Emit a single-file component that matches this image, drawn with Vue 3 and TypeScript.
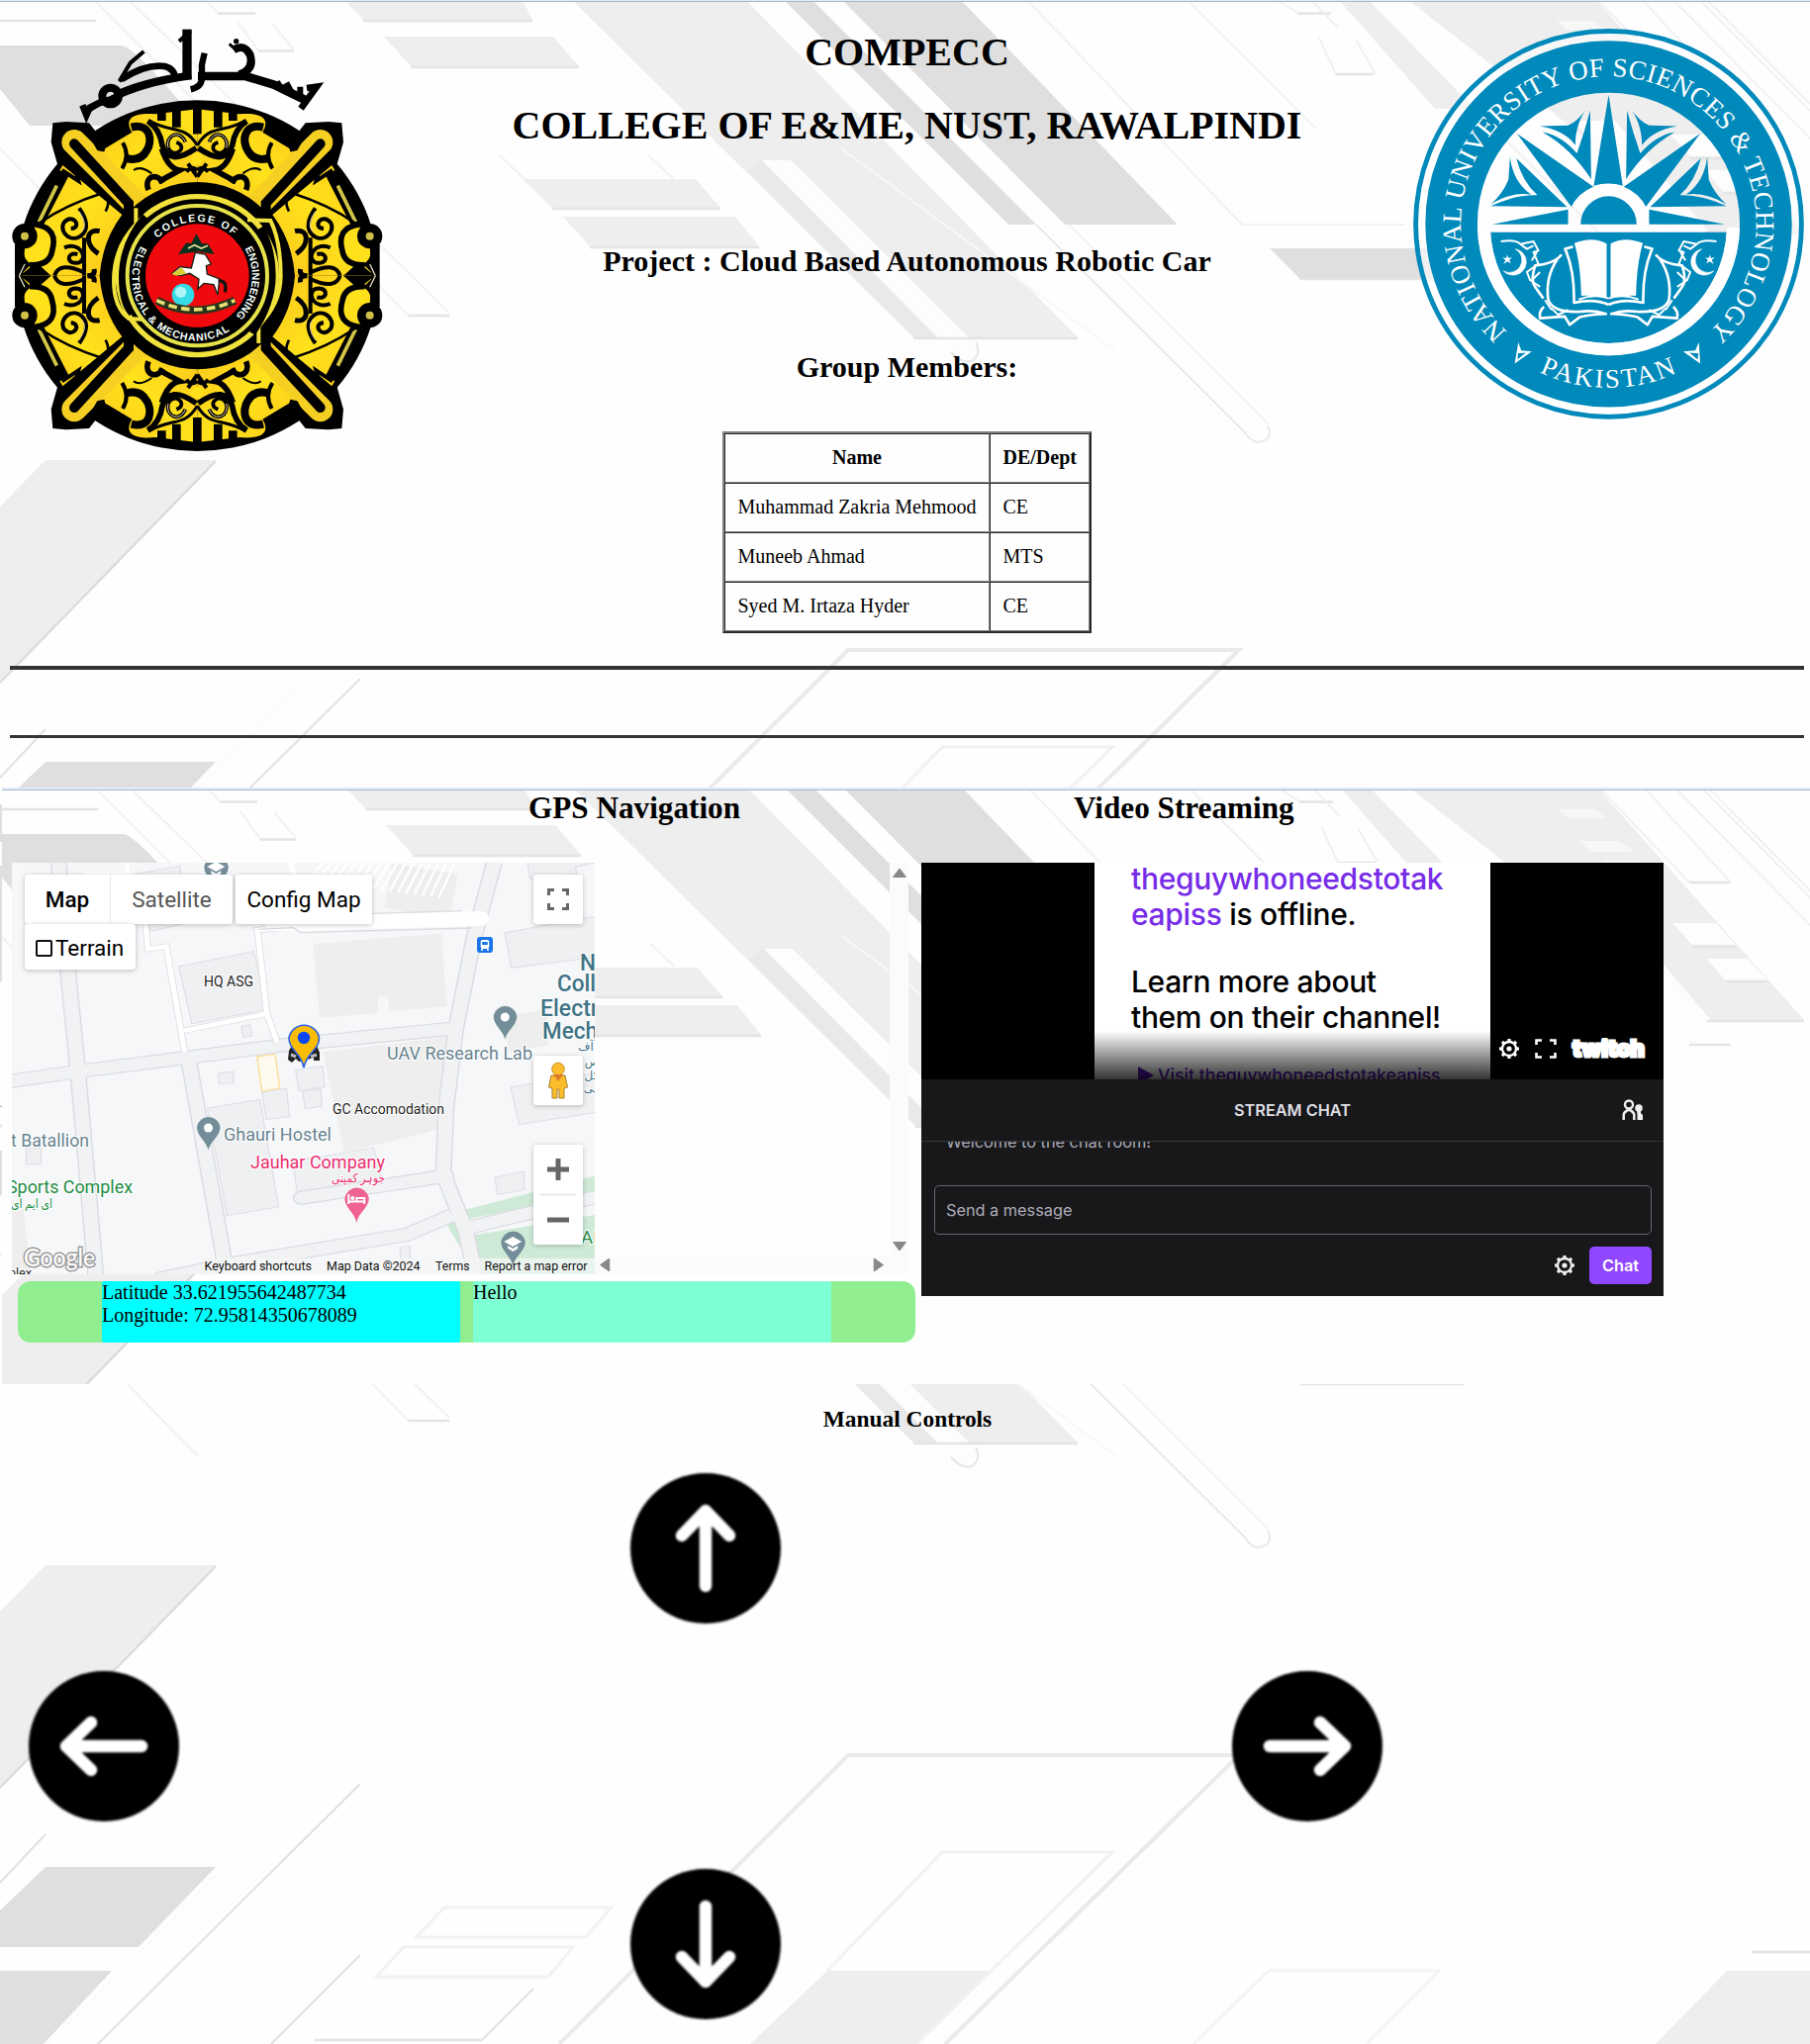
<script setup lang="ts">
interface Member { name: string; dept: string }
interface MapLabel { text: string; x: number; y: number; w: number; size: number; color: string; bold?: boolean }

const members: Member[] = [
  { name: 'Muhammad Zakria Mehmood', dept: 'CE' },
  { name: 'Muneeb Ahmad', dept: 'MTS' },
  { name: 'Syed M. Irtaza Hyder', dept: 'CE' },
]

const labels: MapLabel[] = [
  { text: 'HQ ASG', x: 206, y: 997, w: 50, size: 14.5, color: '#222' },
  { text: 'GC Accomodation', x: 336, y: 1126, w: 113, size: 14.5, color: '#222' },
  { text: 'UAV Research Lab', x: 391, y: 1070.5, w: 147, size: 18, color: '#67838f' },
  { text: 'Ghauri Hostel', x: 226, y: 1152.5, w: 109, size: 18, color: '#67838f' },
  { text: 't Batallion', x: 11, y: 1158.5, w: 79, size: 18, color: '#67838f' },
  { text: 'Jauhar Company', x: 253, y: 1180.5, w: 136, size: 18, color: '#e92d6e' },
  { text: 'Sports Complex', x: 7, y: 1206, w: 127, size: 18, color: '#218c43' },
  { text: 'N', x: 586, y: 980.5, w: 16, size: 23, color: '#3f7385', bold: true },
  { text: 'College', x: 563, y: 1001.5, w: 76, size: 23, color: '#3f7385', bold: true },
  { text: 'Electrical', x: 546, y: 1027, w: 95, size: 23, color: '#3f7385', bold: true },
  { text: 'Mechanical', x: 548, y: 1050, w: 116, size: 23, color: '#3f7385', bold: true },
  { text: 'AP', x: 587, y: 1257, w: 24, size: 18, color: '#218c43' },
  { text: 'plex', x: 9, y: 1291, w: 23, size: 13.5, color: '#222' },
]

const footer = [
  { text: 'Keyboard shortcuts', x: 206.5, w: 108.5 },
  { text: 'Map Data ©2024', x: 330, w: 94.5 },
  { text: 'Terms', x: 440, w: 34.5 },
  { text: 'Report a map error', x: 489.5, w: 104 },
]

const greyPins = [
  { x: 210.5, y: 1140 },
  { x: 510.3, y: 1028 },
]

const schoolPins = [
  { x: 218.3, y: 877 },
  { x: 518.3, y: 1256 },
]

const teeth = [0, 45, 90, 135, 180, 225, 270, 315]

const controls = [
  { dir: 'up', rot: 0 },
  { dir: 'left', rot: -90 },
  { dir: 'right', rot: 90 },
  { dir: 'down', rot: 180 },
]
</script>

<template>
  <div class="page">
    <svg class="backdrop" width="1829" height="2066" viewBox="0 0 1829 2066" aria-hidden="true">
      <defs>
        <symbol id="tile" viewBox="0 0 1829 1120">
          <rect width="1829" height="1120" fill="#fefefe" />
          <g fill="#eee">
            <path d="M348 0H528L538 20H367Z" />
            <path d="M388 37H559L585 67H415Z" />
            <path d="M528 181H703L728 210H558Z" />
            <path d="M569 219H743L767 249H596Z" />
            <path d="M578 0H754L1089 341H923Z" />
            <path d="M1353 0H1383L1490 110H1450Z" />
            <path d="M1423 0H1613L1821 234H1723Z" />
            <path d="M46 465H218L0 690V512Z" />
            <path d="M836 875H1001L926 949L820 1053H660L758 949Z" />
            <path d="M1745 875H1829V1003H1620Z" />
          </g>
          <path d="M0 46H123C140 50 180 103 205 127H30L0 90Z" fill="#dfdfdf" />
          <g fill="#dfdfdf">
            <path d="M792 0H821L1047 227H1019Z" />
            <path d="M851 0H971L1190 227H1076Z" />
            <path d="M1283 251H1480V281H1313Z" />
            <path d="M46 770H218L140 851H0V814Z" />
            <path d="M0 875H113L44 949L0 993Z" />
          </g>
          <path d="M770 162L948 341H923L755 172Z" fill="#e9e9e9" />
          <path d="M770 162H799L984 346Q992 364 973 363Q966 362 961 355Z" fill="#fdfdfd" />
          <g fill="#fdfdfd">
            <path d="M1590 122H1632L1747 258H1705Z" />
            <path d="M1688 136H1732L1752 158H1708Z" />
            <path d="M1722 172H1764L1784 194H1742Z" />
            <path d="M1573 21H1610L1622 30H1583ZM1594 53H1634L1650 64H1606ZM1616 73H1655L1663 83H1626Z" opacity=".6" />
          </g>
          <g fill="none" stroke="#e4e4e4" stroke-width="2.5">
            <path d="M0 21H97M220 13.500H258M261 51.500H297M413 319H454M367 21H538M415 68H585M558 211H728M596 250H767M923 342H1089M1313 282H1480M1723 235H1821M1705 259H1747M1705 95H1747M1708 160H1752M1742 195H1784M1311 13.500H1345M1350 75H1388M1770 856H1829M318 945H488" />
          </g>
          <g fill="none" stroke="#f1f1f1" stroke-width="2">
            <path d="M95 0L413 319M130 0L454 316M208 0L220 13M240 22L261 51M275 24L297 50M1038 0L1255 227H1420M0 150L200 355" />
            <path d="M1080 227L1281 428" />
            <path d="M1047 227L1258 437Q1268 453 1281 443Q1285 438 1281 430" stroke="#e9e9e9" />
            <path d="M850 150L1128 355" stroke="#f8f8f8" />
            <path d="M986 346Q992 358 982 365Q972 368 961 356" stroke="#e6e6e6" />
            <path d="M1615 0L1705 95M1660 0L1747 95M1691 0L1829 140M1718 0L1829 112M1725 0L1829 105" />
            <path d="M1290 0L1311 13M1333 38L1350 75M1370 40L1390 75M1325 0L1352 28" />
            <path d="M1490 110L1620 240M1200 0L1330 130M505 157L530 181M655 157L680 180" />
          </g>
          <g fill="none" stroke="#eaeaea" stroke-width="3">
            <path d="M218 466L0 690" stroke-width="2.500" stroke="#dcdcdc" />
            <path d="M364 686L99 949M46 737L0 786M364 859L274 949M539 893L488 944" stroke-width="2" stroke="#e1e1e1" />
            <path d="M565 949L857 657H1252L955 949" stroke-width="4" />
            <path d="M836 875L952 755H1124L926 949" stroke="#f1f1f1" />
            <path d="M449 811H618L592 841H421ZM408 851H579L554 881H380Z" stroke="#f2f2f2" />
            <path d="M1206 949L1282 875H1454L1381 949" stroke="#f3f3f3" />
            <path d="M310 687L48 949" stroke="#fafafa" stroke-width="2" />
          </g>
          <rect width="1829" height="1" fill="#e1ebf8" />
          <rect y="1" width="1829" height="1" fill="#a9b8cc" />
        </symbol>
        <symbol id="gear" viewBox="-12 -12 24 24">
          <g fill="currentColor">
            <rect v-for="a in teeth" :key="a" x="-1.600" y="-10" width="3.200" height="3" :transform="`rotate(${a})`" />
          </g>
          <circle r="7" fill="none" stroke="currentColor" stroke-width="2.300" /><circle r="2.600" fill="currentColor" />
        </symbol>
      </defs>
      <use href="#tile" width="1829" height="1120" />
      <use href="#tile" y="1117" width="1829" height="1120" />
    </svg>

    <header class="head">
      <svg class="crest" width="392" height="440" viewBox="36 80 1176 1320" role="img" aria-label="College of E&amp;ME crest">
        <defs>
          <linearGradient id="gold" x1="0" y1="0" x2="1" y2="1">
            <stop offset="0" stop-color="#fdc81a" /><stop offset=".5" stop-color="#ffe21c" /><stop offset="1" stop-color="#fbc51c" />
          </linearGradient>
          <g id="quarter">
            <path d="M160 372L200 368L270 372L300 410L340 440L240 520L175 500L155 430Z" fill="#000" />
            <path d="M225 430L440 655" stroke="#000" stroke-width="104" fill="none" />
            <path d="M300 460L400 400C370 350 420 340 470 345L598 330V560Q500 560 425 620Z" fill="url(#gold)" />
            <path d="M190 500L370 650Q310 730 302 835H60L95 800Q60 780 80 740L110 680L150 570Z" fill="url(#gold)" />
            <path d="M225 430L425 630" stroke="#f5cf22" stroke-width="76" stroke-linecap="round" fill="none" />
            <path d="M225 435L390 615V700" stroke="#000" stroke-width="30" stroke-linecap="round" fill="none" />
            <path d="M270 395L300 448L318 452" stroke="#000" stroke-width="16" fill="none" />
            <g fill="none" stroke="#000" stroke-width="24">
              <path d="M398 385C460 370 462 430 445 455Q425 492 380 478" />
              <path d="M370 510Q395 470 372 432" stroke-width="12" />
              <path d="M448 366Q485 390 492 440Q512 505 595 448" stroke-width="17" />
              <path d="M452 364C520 405 560 375 598 440" stroke-width="9" />
              <path d="M562 430C545 388 500 410 510 447C525 485 575 445 535 430" stroke-width="11" />
              <path d="M562 430C545 388 500 410 510 447" stroke="#e9d8b8" stroke-width="3" />
              <path d="M490 450Q510 510 545 515L480 550M450 575C435 535 475 520 495 553" stroke-width="17" />
              <path d="M405 515Q425 500 460 525" stroke-width="6" />
              <path d="M565 520Q580 500 598 515M570 495L598 535" stroke-width="12" />
              <path d="M490 325V365M535 325V385" stroke-width="26" />
              <path d="M598 320V405" stroke-width="26" />
              <path d="M225 500L238 548L188 515" stroke-width="12" />
              <path d="M190 520L108 680" stroke-width="44" /><path d="M172 562L118 672" stroke="#d2c648" stroke-width="11" />
              <path d="M108 680Q178 690 158 760Q150 805 90 802" stroke-width="17" />
              <path d="M120 675Q200 620 310 585Q340 600 320 640" stroke-width="8" />
              <path d="M240 630Q275 680 252 708C220 742 178 705 193 675C220 640 252 690 215 692" stroke-width="12" />
              <path d="M240 640Q268 680 248 702" stroke="#e9d8b8" stroke-width="3" />
              <path d="M302 700C260 690 255 740 298 768" stroke-width="15" />
              <path d="M195 750C240 730 270 780 240 795C200 805 200 760 235 770M165 835Q180 790 255 825M255 720V835" stroke-width="12" />
              <path d="M265 835Q290 835 285 815" stroke-width="15" />
            </g>
            <circle cx="75" cy="715" r="38" /><circle cx="75" cy="715" r="12" fill="#cfc14a" />
            <path d="M45 740H75L70 835H45Z" />
            <path d="M60 835L110 795L155 835Z" /><path d="M75 800L58 835" stroke="#e6dfc4" stroke-width="4" />
          </g>
        </defs>
        <ellipse cx="598" cy="835" rx="550" ry="532" />
        <use href="#quarter" />
        <use href="#quarter" transform="translate(1196 0) scale(-1 1)" />
        <use href="#quarter" transform="translate(0 1670) scale(1 -1)" />
        <use href="#quarter" transform="translate(1196 1670) scale(-1 -1)" />
        <circle cx="598" cy="480" r="19" fill="#ffe01a" /><circle cx="598" cy="1190" r="19" fill="#ffe01a" />
        <circle cx="598" cy="835" r="284" />
        <circle cx="598" cy="835" r="240" fill="none" stroke="#f2e23c" stroke-width="16" />
        <path d="M412 630V680Q345 750 345 850Q345 930 390 965L440 968" fill="none" stroke="#f2e23c" stroke-width="12" />
        <path d="M784 1040V985Q851 920 851 835Q851 730 820 668L750 666" fill="none" stroke="#f2e23c" stroke-width="12" />
        <path d="M440 655Q370 740 370 840Q370 920 400 950" fill="none" stroke="#000" stroke-width="20" />
        <path d="M765 1010Q826 920 826 835Q826 750 790 690" fill="none" stroke="#000" stroke-width="20" />
        <circle cx="598" cy="835" r="212" stroke="#e6e24a" stroke-width="12" />
        <circle cx="598" cy="835" r="157" fill="#f00a0d" />
        <path id="crestTop" d="M478 722A166 166 0 0 1 718 722" fill="none" />
        <path id="crestRight" d="M742 752A168 168 0 0 1 712 958" fill="none" />
        <path id="crestBottom" d="M427 745A191 191 0 0 0 718 985" fill="none" />
        <g class="crest-text">
          <text><textPath href="#crestTop" textLength="254">COLLEGE OF</textPath></text>
          <text><textPath href="#crestRight" textLength="222">ENGINEERING</textPath></text>
          <text><textPath href="#crestBottom" textLength="512">ELECTRICAL &amp; MECHANICAL</textPath></text>
        </g>
        <path d="M540 770L565 735L580 738L595 708L612 738L630 738L650 770L600 762Z" fill="#06301c" /><path d="M570 752L590 742L610 752L630 744" stroke="#e8e2a0" stroke-width="5" fill="none" />
        <path d="M592 765L622 770L640 800L625 805L628 830L665 845L660 893L648 862L618 858L600 875L603 845L575 828L548 835L522 828L545 808L580 812Z" fill="#fff" stroke="#172015" stroke-width="4" />
        <path d="M520 830L550 810L565 828L535 835Z" fill="#d9cf35" />
        <path d="M662 850Q690 850 682 885" fill="none" stroke="#111" stroke-width="10" />
        <circle cx="555" cy="893" r="34" fill="#35dbe6" /><circle cx="548" cy="885" r="17" fill="#aaf7f5" />
        <path d="M475 910Q590 970 712 910" fill="none" stroke="#27351b" stroke-width="24" /><path d="M475 910Q590 965 712 910" fill="none" stroke="#e7df72" stroke-width="11" stroke-dasharray="26 13" />
        <g fill="none" stroke="#000" stroke-width="27">
          <path d="M250 318L262 348L272 325L318 302" stroke-width="20" /><path d="M262 336Q300 308 335 300Q430 250 580 230" stroke-width="19" />
          <path d="M350 283Q430 245 560 226" stroke-width="14" />
          <circle cx="335" cy="290" r="25" stroke-width="24" />
          <path d="M436 155L395 190L362 245Q420 203 490 198" stroke-width="12" /><path d="M368 240Q440 192 500 200Q528 208 530 232" stroke-width="20" />
          <path d="M567 88V240" stroke-width="28" /><path d="M543 124L578 92" stroke-width="12" />
          <path d="M620 160L612 195V235Q612 262 578 270" stroke-width="19" /><path d="M600 230H745L830 256L925 302" stroke-width="26" />
          <path d="M725 225Q772 210 758 165Q740 130 708 150" stroke-width="24" /><path d="M695 132L715 150" stroke-width="9" />
          <path d="M840 245Q850 278 890 285M868 250L890 290M910 262V290" stroke-width="18" /><path d="M912 328L960 262L930 266" stroke-width="20" />
        </g>
        <circle cx="716" cy="124" r="8" />
      </svg>

      <div class="titles">
        <h1>COMPECC</h1>
        <h1 class="second">COLLEGE OF E&amp;ME, NUST, RAWALPINDI</h1>
        <h2 class="project">Project : Cloud Based Autonomous Robotic Car</h2>
        <h2 class="group">Group Members:</h2>
        <table>
          <thead><tr><th>Name</th><th>DE/Dept</th></tr></thead>
          <tbody>
            <tr v-for="m in members" :key="m.name"><td>{{ m.name }}</td><td>{{ m.dept }}</td></tr>
          </tbody>
        </table>
      </div>

      <svg class="seal" width="395" height="395" viewBox="84 87 1186 1185" role="img" aria-label="NUST seal">
        <defs>
          <g id="halfSeal" fill="#0089bb">
            <path d="M955 405L790 627Q770 585 723 566Z" />
            <path d="M800 635L1030 680H800Z" />
            <path d="M733 335Q750 400 773 465Q820 410 878 400Q790 450 730 543Z" />
            <path d="M738 322Q770 368 800 380L885 382Q810 395 778 440Q778 370 738 322Z" />
            <path d="M957 480Q940 550 893 592Q960 590 1035 625L803 628Z" />
            <path d="M976 475L981 545Q1000 590 1035 620Q970 580 912 590Q968 550 976 475Z" />
          </g>
          <g id="laurel" fill="none" stroke="#fff" stroke-width="8" stroke-linejoin="round">
            <path d="M683 739Q725 715 781 737Q762 800 760 897Q720 895 683 905Z" fill="#fff" stroke="none" />
            <path d="M785 748L809 755Q780 820 782 918Q720 905 677 924" />
            <path d="M677 905Q720 890 768 908" stroke-width="5" />
            <path d="M820 772Q840 800 900 805Q915 850 900 870L875 905M832 785Q870 840 860 910Q845 950 760 945Q720 940 685 952Q740 955 765 962L795 985L810 960L885 965Q890 945 873 930" />
            <path d="M1004 732Q960 725 945 740L905 732L890 760L905 765L890 800L925 825L915 850L885 870M945 740L925 755L905 745M895 765L910 790M885 825L910 850M850 935L830 955L800 940M870 910L850 940" stroke-width="6" />
            <path d="M960 755A40 40 0 1 0 996 822A36 36 0 1 1 960 755Z" fill="#fff" stroke-width="2" />
            <path d="M985 772L987 783L999 780L990 789L996 801L984 793L974 799L978 788L970 781L981 782Z" fill="#fff" stroke="none" />
          </g>
        </defs>
        <circle cx="677" cy="679" r="585" fill="none" stroke="#0089bb" stroke-width="15" />
        <circle cx="677" cy="679" r="567" fill="none" stroke="#fff" stroke-opacity=".55" stroke-width="22" />
        <circle cx="677" cy="679" r="477" fill="none" stroke="#0089bb" stroke-width="158" />
        <path d="M677 288L720 563Q677 550 632 563Z" fill="#0089bb" />
        <use href="#halfSeal" /><use href="#halfSeal" transform="translate(1354 0) scale(-1 1)" />
        <path d="M592 680A85 85 0 0 1 762 680Z" fill="#0089bb" />
        <path d="M318 704H1035A359 359 0 0 1 677 1041A359 359 0 0 1 318 704Z" fill="#0089bb" />
        <path d="M279 690H318A359 359 0 0 0 677 1041A359 359 0 0 0 1036 690H1075A398 398 0 0 1 677 1079A398 398 0 0 1 279 690Z" fill="#fff" />
        <use href="#laurel" /><use href="#laurel" transform="translate(1354 0) scale(-1 1)" />
        <path id="sealTop" d="M370 1006A448 448 0 1 1 985 1004" fill="none" />
        <path id="sealBottom" d="M466 1129A497 497 0 0 0 888 1129" fill="none" />
        <g class="seal-text">
          <text><textPath href="#sealTop" textLength="2142">NATIONAL UNIVERSITY OF SCIENCES &amp; TECHNOLOGY</textPath></text>
          <text><textPath href="#sealBottom" textLength="432">PAKISTAN</textPath></text>
        </g>
        <path d="M403 1038L392 1103L444 1066L412 1063ZM951 1038L955 1103L903 1066L940 1063Z" fill="#fff" />
        <path d="M402 1072L401 1090L426 1070ZM950 1072L947 1090L922 1070Z" fill="#0089bb" />
      </svg>
    </header>

    <hr class="thick"><hr class="thin">

    <section class="live">
      <svg class="live-bg" width="1827" height="602" viewBox="0 0 1827 602" aria-hidden="true"><use href="#tile" width="1829" height="1120" /></svg>

      <div class="column nav">
        <h2>GPS Navigation</h2>
        <div class="map-scroll">
          <div class="map">
            <svg class="map-art" width="589" height="416" viewBox="12 872 589 416" aria-hidden="true">
              <rect x="12" y="872" width="589" height="416" fill="#f6f7f9" />
              <g transform="translate(0 860) scale(.3954 .3333)">
                <g fill="#eff0f2" stroke="#dedfe5" stroke-width="3">
                  <path d="M457 350L648 305L686 480L490 524Z" /><path d="M1290 248L1540 195V320L1307 355Z" /><path d="M1305 717L1540 670V790L1327 830Z" />
                  <path d="M530 780L664 754L712 1080L580 1106Z" /><path d="M748 940L850 922L955 900L975 990L760 1040Z" /><path d="M1264 990L1340 972V1028L1272 1042Z" />
                  <path d="M755 665L824 652L830 715L764 728ZM773 730L820 722L823 774L780 782ZM670 732L732 720L740 806L680 815ZM558 674L596 669L598 704L560 706ZM617 533L640 527L643 562L622 565ZM67 900H105V950H67ZM1022 1202L1048 1198V1250H1024Z" />
                  <path d="M350 70L460 45L465 110L520 100L540 200L385 245L370 180ZM1348 36L1355 85L1475 70L1470 50L1540 30" />
                </g>
                <g fill="#eee"><path d="M800 283L1128 250L1142 472L995 487L990 440L965 443L967 492L817 506Z" /><path d="M825 610L1155 563L1135 840L880 915Z" /><path d="M1002 38L1170 70L1150 207L983 172Z" /><path d="M1290 500L1400 480V590L1298 610Z" /><path d="M30 1060L60 1090L80 1290H30Z" /></g>
                <g stroke="#fff" stroke-width="6"><path v-for="n in 17" :key="n" :d="`M${765 + n * 21} ${90 + n * 3}L${805 + n * 21} 36`" /></g>
                <path d="M1185 1090L1540 980V1040L1200 1115ZM1140 1130L1165 1125L1178 1205ZM1212 1165L1540 1100V1290H1225Z" fill="#cfe9d7" />
                <g fill="none" stroke="#d9dbe0" stroke-width="43">
                  <path d="M20 700L180 672L470 628L720 590L1165 538" /><path d="M150 36L175 380L200 680L245 1290" /><path d="M480 620L510 820L580 1290" />
                  <path d="M1263 36L1212 260L1165 538L1140 780L1133 980L1190 1150L1215 1290" /><path d="M770 1052L960 1018L1140 986" stroke-linecap="round" />
                  <path d="M400 1300L600 1250L1040 1164L1155 1105" /><path d="M1190 1145L1540 1045" />
                </g>
                <g fill="none" stroke="#f0f2f4" stroke-width="36">
                  <path d="M20 700L180 672L470 628L720 590L1165 538" /><path d="M150 36L175 380L200 680L245 1290" /><path d="M480 620L510 820L580 1290" />
                  <path d="M1263 36L1212 260L1165 538L1140 780L1133 980L1190 1150L1215 1290" /><path d="M770 1052L960 1018L1140 986" stroke-linecap="round" />
                  <path d="M400 1300L600 1250L1040 1164L1155 1105" /><path d="M1190 1145L1540 1045" />
                </g>
                <g fill="none" stroke="#dadce1" stroke-width="18"><path d="M370 200L378 298L425 290L472 610M470 545L682 494L708 580M682 494L658 240L750 230" /></g>
                <g fill="none" stroke="#fff" stroke-width="14"><path d="M370 200L378 298L425 290L472 610M470 545L682 494L708 580M682 494L658 240L750 230" /></g>
                <path d="M700 220H770L1228 205" fill="none" stroke="#fff" stroke-width="44" stroke-linecap="round" />
                <path d="M660 238L750 233L768 248L1205 234M780 196L1180 182" fill="none" stroke="#dadce1" stroke-width="4" />
                <path d="M325 36V90M740 36L755 80M220 70H330" stroke="#fff" stroke-width="12" />
                <path d="M657 624L703 617L715 720L669 730Z" fill="#fefaf0" stroke="#fae19e" stroke-width="4" />
                <path d="M1530 1235H520V1284H1530Z" fill="#f4f5f6" opacity=".75" />
              </g>
              <g v-for="p in greyPins" :key="p.x" :transform="`translate(${p.x} ${p.y})`">
                <path d="M0 24C-2 13-12 9-12-1A12.500 13 0 0 1 12.500-1C12.500 9 2 13 0 24Z" fill="#748e99" stroke="#fff" stroke-width=".7" />
                <circle r="4.500" fill="#fff" />
              </g>
              <g transform="translate(360.300 1212)"><path d="M0 24C-2 13-12 9-12-1A12.500 13 0 0 1 12.500-1C12.500 9 2 13 0 24Z" fill="#f06292" /><path d="M-8-5V5M-8 2.500H8V5M8 2.500V-1H0V2" fill="none" stroke="#fff" stroke-width="2" /><circle cx="-4" cy="-1" r="2" fill="#fff" /></g>
              <g v-for="c in schoolPins" :key="c.y" :transform="`translate(${c.x} ${c.y})`"><path d="M0 24C-2 13-12 9-12-1A12.500 13 0 0 1 12.500-1C12.500 9 2 13 0 24Z" fill="#748e99" /><path d="M-9-1L0-6L9-1L0 4ZM-5 3V6L0 9L5 6V3L0 6Z" fill="#fff" /></g>
              <g transform="translate(482 947)"><rect width="16" height="16" rx="3" fill="#1a73e8" /><rect x="3.700" y="3" width="8.600" height="9" rx="2" fill="#fff" /><path d="M5.200 5H10.800V8H5.200Z" fill="#1a73e8" /><path d="M5 12V14M11 12V14" stroke="#fff" stroke-width="1.600" /></g>
              <g class="label">
                <text v-for="l in labels" :key="l.text" :x="l.x" :y="l.y" :textLength="l.w" lengthAdjust="spacingAndGlyphs" :font-size="l.size" :fill="l.color" :font-weight="l.bold ? 500 : 400">{{ l.text }}</text>
                <text x="362" y="1195" text-anchor="middle" font-size="12.500" textLength="54" lengthAdjust="spacingAndGlyphs" fill="#e92d6e">جوہر کمپنی</text>
                <text x="32" y="1221" text-anchor="middle" font-size="12.500" textLength="42" lengthAdjust="spacingAndGlyphs" fill="#218c43">ای ایم ای</text>
                <text x="592" y="1062" text-anchor="middle" font-size="12" fill="#3f7385">آف</text>
                <text x="598" y="1077" text-anchor="middle" font-size="12" fill="#3f7385">س</text>
                <text x="598" y="1091" text-anchor="middle" font-size="12" fill="#3f7385">کل</text>
                <text x="598" y="1104" text-anchor="middle" font-size="12" fill="#3f7385">می</text>
              </g>
              <g class="foot"><text v-for="f in footer" :key="f.text" :x="f.x" y="1284" :textLength="f.w" lengthAdjust="spacingAndGlyphs">{{ f.text }}</text></g>
              <text class="google" x="24" y="1279.500" textLength="72" lengthAdjust="spacingAndGlyphs">Google</text>
              <g transform="translate(307 1064)">
                <path d="M-15 -2L-11-9H12L16 0V8H10V5L-5 9L-8 6L-12 10L-16 7Z" fill="#222" /><path d="M-13 2L-8 4M7 4L13 2" stroke="#bbb" stroke-width="3" />
                <path d="M0 15C-3-1-15-2-15-15A15.500 15.500 0 0 1 15.500-15C15.500-2 3-1 0 15Z" fill="#fbbc04" stroke="#2b61e8" stroke-width="1.600" /><circle cy="-15" r="6.200" fill="#0b48f5" />
              </g>
            </svg>
            <div class="map-types"><button class="on">Map</button><button class="sat">Satellite</button></div>
            <button class="config">Config Map</button>
            <label class="terrain"><i></i>Terrain</label>
            <div class="tool full"><svg width="22" height="22" viewBox="0 0 22 22"><path d="M1.500 7V1.500H7M15 1.500H20.500V7M20.500 15V20.500H15M7 20.500H1.500V15" fill="none" stroke="#666" stroke-width="3" /></svg></div>
            <div class="tool peg"><svg width="22" height="38" viewBox="0 0 22 38"><path d="M4 14H18L20.500 26L17 27V37H12V28H10V37H5V27L1.500 26Z" fill="#fbbd2c" stroke="#a8812d" stroke-width="1" /><circle cx="11" cy="7.500" r="6.300" fill="#fbbd2c" stroke="#c8922d" /><path d="M6 13H16L11 20Z" fill="#dd7b25" /></svg></div>
            <div class="tool zoom"><svg width="50" height="101" viewBox="0 0 50 101"><path d="M25 14V36M14 25H36M14 76H36" stroke="#666" stroke-width="5" /><path d="M6 50.500H43" stroke="#e3e3e3" stroke-width="1.500" /></svg></div>
          </div>
          <div class="vbar"><svg width="14" height="9"><path d="M7 .5L13 8.500H1Z" stroke-width="1.500" /></svg><svg width="14" height="9"><path d="M7 8.500L13 .5H1Z" stroke-width="1.500" /></svg></div>
          <div class="hbar"><svg width="11" height="13"><path d="M1 6.500L9.500 .5V12.500Z" stroke-width="1.500" /></svg><svg width="11" height="13"><path d="M10 6.500L1.500 .5V12.500Z" stroke-width="1.500" /></svg></div>
        </div>
        <div class="status">
          <div class="coords">Latitude 33.621955642487734<br>Longitude: 72.95814350678089</div>
          <div class="hello">Hello</div>
        </div>
      </div>

      <div class="column stream">
        <h2>Video Streaming</h2>
        <div class="player">
          <div class="offline">
            <p><b>theguywhoneedstotak<br>eapiss</b> is offline.</p>
            <p class="more">Learn more about<br>them on their channel!</p>
            <a><svg width="17" height="18"><path d="M0 0L16 9L0 18Z" fill="#5c16c5" /></svg><span>Visit theguywhoneedstotakeapiss</span></a>
            <div class="shade"></div>
          </div>
          <div class="player-tools">
            <svg width="24" height="24"><use href="#gear" width="24" height="24" /></svg>
            <svg width="22" height="20" viewBox="0 0 22 20"><path d="M1.500 6V1.500H7M15 1.500H20.500V6M20.500 14V18.500H15M7 18.500H1.500V14" fill="none" stroke="#fff" stroke-width="2.600" /></svg>
            <svg width="77" height="22" viewBox="0 0 77 22"><text class="twitch" x="2" y="19" textLength="73" lengthAdjust="spacingAndGlyphs">twitch</text></svg>
          </div>
        </div>
        <div class="chat">
          <div class="chat-head"><span>STREAM CHAT</span>
            <svg width="22" height="22" viewBox="0 0 22 22"><circle cx="7" cy="5.500" r="4" fill="none" stroke="#efeff1" stroke-width="2.400" /><path d="M1.700 21V16Q1.700 13 7 10.500Q12.300 13 12.300 16V21" fill="none" stroke="#efeff1" stroke-width="2.500" /><circle cx="17" cy="9" r="3.800" fill="#efeff1" /><path d="M15 11H19V14L21 16V21H15.500V16Z" fill="#efeff1" /></svg>
          </div>
          <div class="welcome"><span>Welcome to the chat room!</span></div>
          <div class="message">Send a message</div>
          <div class="chat-foot"><svg width="24" height="24"><use href="#gear" width="24" height="24" /></svg><button>Chat</button></div>
        </div>
      </div>
    </section>

    <section class="manual">
      <h3>Manual Controls</h3>
      <div class="pad">
        <button v-for="c in controls" :key="c.dir" :class="c.dir" :aria-label="c.dir">
          <svg width="156" height="156" viewBox="-78 -78 156 156">
            <circle r="76" />
            <g :transform="`rotate(${c.rot})`"><path d="M0 38V-38M-24-13L0-38L24-13" fill="none" stroke="#fff" stroke-width="12.500" stroke-linecap="round" stroke-linejoin="round" /></g>
          </svg>
        </button>
      </div>
    </section>
  </div>
</template>

<style>
html, body { margin: 0; background: #fefefe; }
</style>

<style scoped>
* { box-sizing: border-box; }
.page { position: relative; width: 1829px; height: 2066px; overflow: hidden; font: 20px/23px "Liberation Serif", "Times New Roman", serif; color: #000; }
.backdrop { position: absolute; left: 0; top: 0; z-index: 0; }
button { border: 0; padding: 0; font: inherit; color: inherit; background: none; }
h1, h2, h3, p { margin: 0; font-weight: bold; }
.head { position: relative; display: flex; height: 673px; padding: 27px 6px 0 12px; align-items: flex-start; }
.crest { flex: none; width: 392px; }
.seal { flex: none; margin-top: 2px; }
.crest-text text { font: bold 32px "Liberation Sans", sans-serif; fill: #f4fffa; }
.seal-text text { font: 81px "Liberation Serif", serif; fill: #fff; }
.titles { flex: 1; padding-top: 3px; padding-left: 1px; display: flex; flex-direction: column; align-items: center; white-space: nowrap; }
h1 { font-size: 40px; line-height: 45px; }
.second { margin-top: 29px; }
h2 { font-size: 30px; line-height: 34px; }
.project { margin-top: 98px; }
.group { margin-top: 73px; }
table { margin-top: 48px; width: 373px; border: 2px solid; border-color: #808080 #2b2b2b #2b2b2b #808080; border-spacing: 0; background: #fefefe; table-layout: fixed; }
th, td { height: 50px; border: 1px solid; border-color: #2b2b2b #808080 #808080 #2b2b2b; padding: 0 12.5px 2px; text-align: left; }
th:first-child { width: 268px; text-align: center; }
hr { position: relative; margin: 0 6px 0 10px; border: 0; background: #353333; }
.thick { height: 4px; }
.thin { height: 3px; margin-top: 66px; margin-bottom: 50px; }
.live { position: relative; display: flex; margin-left: 2px; height: 603px; border-top: 1px solid #e1ebf8; overflow: hidden; }
.live-bg { position: absolute; left: 0; top: 0; }
.column { position: relative; }
.column h2 { height: 34px; margin-top: 3px; white-space: nowrap; font-size: 31.2px; line-height: 33px; }
.nav { width: 929px; padding-left: 10px; }
.nav h2 { padding-left: 522px; }
.map-scroll { position: relative; margin-top: 38px; width: 906px; height: 416px; }
.map { position: relative; width: 589px; height: 416px; z-index: 1; font-family: Roboto, sans-serif; }
.map-art { display: block; }
.label text { font-family: Roboto, "DejaVu Sans", sans-serif; paint-order: stroke; stroke: #fff; stroke-width: 2px; }
.foot text { font: 13px Roboto, sans-serif; fill: #111; }
.google { font: 500 24px Lato, sans-serif; fill: #fff; stroke: #999; stroke-width: 3px; paint-order: stroke; }
.map-types, .config, .terrain, .tool { position: absolute; background: #fff; border-radius: 3px; box-shadow: 0 1px 5px rgba(0,0,0,.24); font-size: 22.5px; }
.map-types { left: 13px; top: 12px; height: 50px; display: flex; }
.map-types button { height: 50px; width: 86px; }
.map-types .on { font-weight: 500; }
.map-types .sat { width: 124px; color: #565656; border-left: 1px solid #e8e8e8; }
.config { left: 226px; top: 12px; width: 138px; height: 50px; }
.terrain { left: 13px; top: 62px; width: 112px; height: 46px; display: flex; align-items: center; padding: 2px 0 0 11px; gap: 3px; }
.terrain i { width: 17px; height: 17px; border: 2px solid #111; border-radius: 2px; }
.tool { left: 527px; width: 50px; display: grid; place-items: center; }
.full { top: 12px; height: 50px; }
.peg { top: 195px; height: 50px; }
.zoom { top: 285px; height: 101px; }
.vbar, .hbar { position: absolute; display: flex; justify-content: space-between; align-items: center; background: #fbfbfb; fill: #898989; stroke: #898989; stroke-linejoin: round; }
.vbar { right: 0; top: 0; width: 19px; height: 416px; flex-direction: column; padding: 6px 0 24px; }
.hbar { left: 589px; bottom: 0; width: 298px; height: 19px; padding: 0 6px 0 5px; }
.status { display: flex; gap: 13px; margin: 7px 0 0 6px; width: 907px; height: 62px; padding-left: 85px; background: #90ee90; border-radius: 13px; }
.coords, .hello { width: 362px; height: 62px; border-radius: 2px; }
.coords { background: #0ff; }
.hello { background: #7fffd4; }
.stream { width: 750px; }
.stream h2 { padding-left: 154px; }
.player { position: relative; margin-top: 38px; height: 219px; background: #000; font-family: Inter, sans-serif; }
.offline { position: relative; margin-left: 175px; width: 400px; height: 219px; padding-left: 37px; background: #fff; overflow: hidden; white-space: nowrap; }
.offline p { font: 550 30px/36px Inter, sans-serif; letter-spacing: -.3px; margin-top: -2px; }
.offline b { font-weight: 550; color: #772ce8; }
.offline p.more { margin-top: 32px; letter-spacing: -.35px; }
.offline a { display: flex; align-items: center; gap: 3px; margin: 31px 0 0 7px; font: 500 17.7px/20px Inter, sans-serif; color: #5c16c5; }
.shade { position: absolute; left: 0; right: 0; bottom: 0; height: 49px; background: linear-gradient(rgba(0,0,0,0), rgba(0,0,0,.8)); }
.player-tools { position: absolute; right: 17px; bottom: 19px; display: flex; align-items: center; gap: 14px; color: #fff; }
.twitch { font: 900 23px Inter, sans-serif; fill: #fff; stroke: #fff; stroke-width: 3px; }
.chat { height: 219px; background: #18181b; color: #dedee3; font: 16px/20px Inter, sans-serif; }
.chat-head { display: flex; justify-content: flex-end; align-items: center; height: 63px; padding-right: 20px; border-bottom: 1px solid #353539; }
.chat-head span { flex: 1; padding-left: 42px; text-align: center; font-weight: 600; font-size: 16.3px; }
.welcome { height: 44px; overflow: hidden; padding-left: 25px; color: #adadb8; }
.welcome span { display: block; margin-top: -10px; font-size: 16.3px; }
.message { margin: 0 12px 0 13px; height: 50px; padding: 14px 11px; border: 1px solid #66666b; border-radius: 5px; color: #adadb8; font-size: 16.3px; }
.chat-foot { display: flex; justify-content: flex-end; align-items: center; gap: 13px; padding: 12px 12px 0; color: #efeff1; }
.chat-foot button { width: 63px; height: 38px; border-radius: 5px; background: #9147ff; color: #fff; font-weight: 600; font-size: 16.3px; }
.manual { position: relative; padding-left: 5px; }
.manual h3 { height: 66px; padding: 22px 0 0; text-align: center; font-size: 23.4px; line-height: 27px; }
.pad { display: grid; grid-template-columns: 608.2px 608.2px 608.2px; grid-template-rows: 200px 200px 200px; grid-template-areas: ". up ." "left . right" ". down ."; }
.pad button { width: 200px; height: 200px; display: grid; place-items: center; }
.pad svg { filter: blur(1px); }
.up { grid-area: up; } .left { grid-area: left; } .right { grid-area: right; } .down { grid-area: down; }
</style>
